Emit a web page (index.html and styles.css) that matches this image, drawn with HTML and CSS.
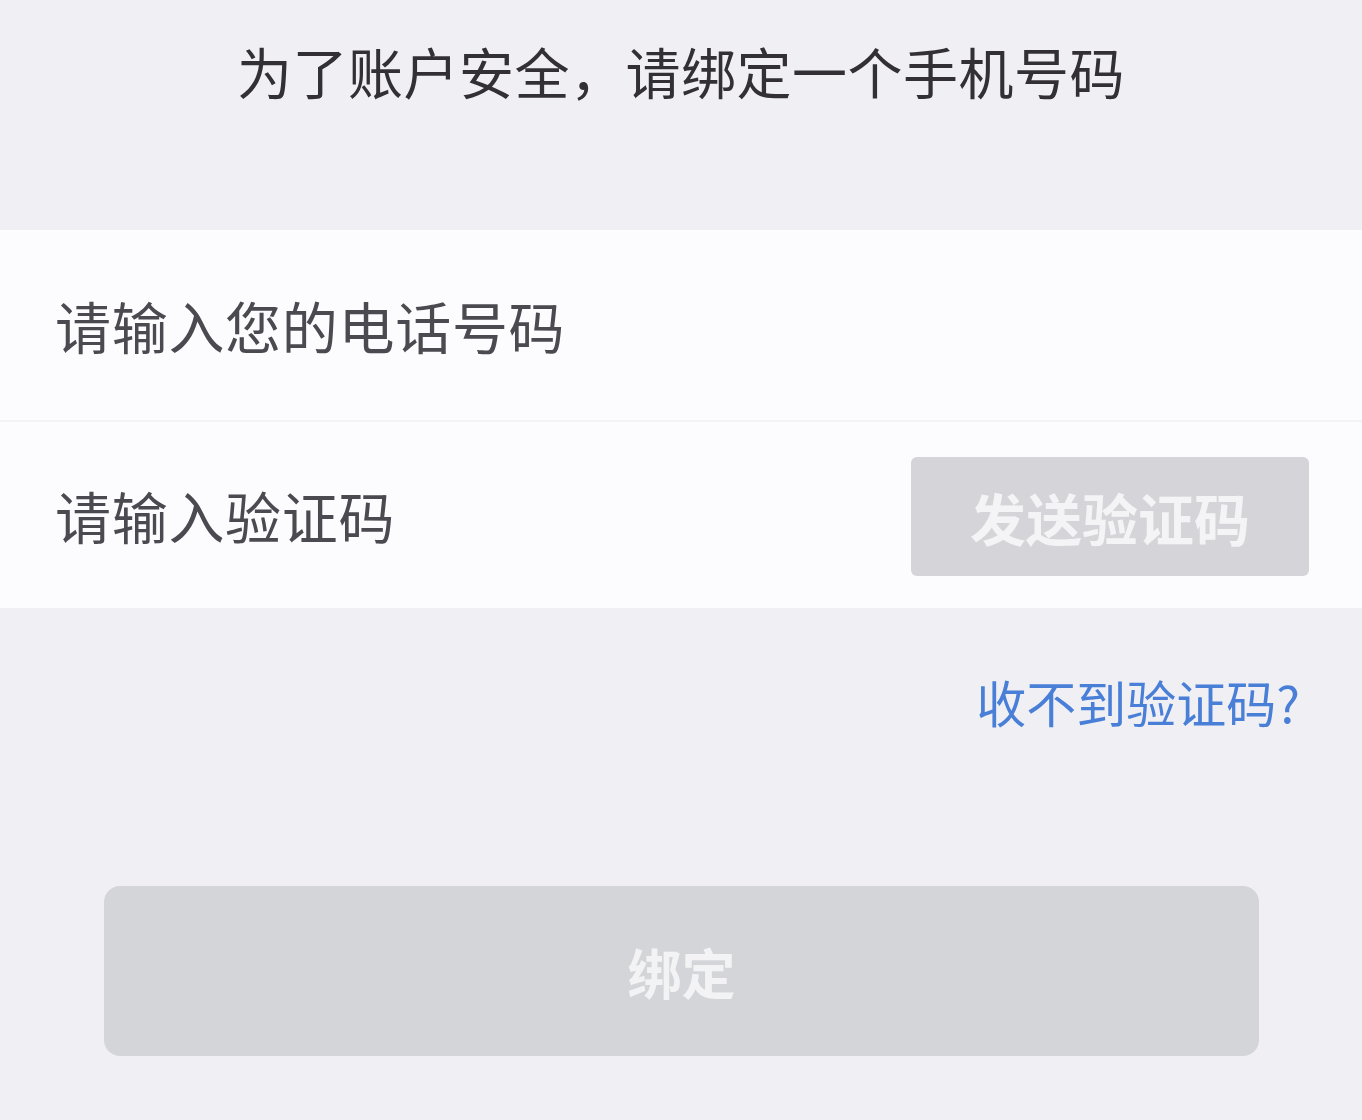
FILE: index.html
```html
<!DOCTYPE html>
<html lang="zh-CN">
<head>
<meta charset="utf-8">
<title>绑定手机号</title>
<link rel="stylesheet" href="styles.css">
</head>
<body>
<div class="page">
  <header class="header">
    <h1 class="title">为了账户安全，请绑定一个手机号码</h1>
  </header>
  <section class="form">
    <div class="row row-phone">
      <span class="placeholder">请输入您的电话号码</span>
    </div>
    <div class="row row-code">
      <span class="placeholder">请输入验证码</span>
      <button class="send-btn">发送验证码</button>
    </div>
  </section>
  <div class="help">
    <a class="help-link">收不到验证码?</a>
  </div>
  <div class="actions">
    <button class="bind-btn">绑定</button>
  </div>
</div>
</body>
</html>
```
FILE: styles.css
```css
html, body {
  margin: 0;
  padding: 0;
  background: #f0f0f4;
}
body {
  font-family: "Noto Sans CJK SC", "Noto Sans", sans-serif;
}
.page {
  width: 1362px;
  height: 1120px;
  display: flex;
  flex-direction: column;
  background: #f0f0f4;
}
.header {
  height: 230px;
  box-sizing: border-box;
  padding-top: 30px;
  display: flex;
  justify-content: center;
}
.title {
  margin: 0;
  font-size: 55px;
  line-height: 80px;
  font-weight: 400;
  color: #333035;
  letter-spacing: 0.5px;
}
.form {
  background: #fcfcfe;
  display: flex;
  flex-direction: column;
}
.row {
  display: flex;
  align-items: center;
  padding-left: 55px;
  padding-right: 53px;
}
.row-phone {
  height: 190px;
  border-bottom: 2px solid #f3f3f6;
}
.row-code {
  height: 186px;
  justify-content: space-between;
}
.placeholder {
  font-size: 56px;
  line-height: 70px;
  color: #4b4a50;
  letter-spacing: 0.7px;
}
.send-btn {
  width: 398px;
  height: 119px;
  border: none;
  border-radius: 6px;
  background: #d5d5d9;
  color: #f4f4f6;
  font-family: inherit;
  font-size: 56px;
  font-weight: 700;
  padding: 0;
  margin-top: 3px;
}
.help {
  height: 190px;
  display: flex;
  justify-content: flex-end;
  align-items: flex-start;
  padding-right: 62px;
  padding-top: 63px;
  box-sizing: border-box;
}
.help-link {
  font-size: 50px;
  line-height: 60px;
  color: #4a7fd8;
}
.actions {
  padding: 88px 103px 0 104px;
}
.bind-btn {
  width: 100%;
  height: 170px;
  border: none;
  border-radius: 16px;
  background: #d4d5d9;
  color: #f3f3f5;
  font-family: inherit;
  font-size: 54px;
  font-weight: 700;
  padding: 0;
}
```
